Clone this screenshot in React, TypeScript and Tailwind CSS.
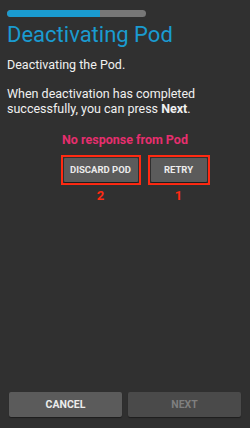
import React from "react";

export default function App() {
  return (
    <div
      className="w-[250px] h-[428px] bg-[#303030] flex flex-col text-white overflow-hidden"
      style={{ fontFamily: "Roboto, 'Liberation Sans', sans-serif" }}
    >
      <div className="px-[7px] pt-[10px]">
        <div className="w-[139px] h-[7px] rounded-full bg-[#777777] overflow-hidden">
          <div className="w-[93px] h-full bg-[#1a9bd0] rounded-l-full" />
        </div>
        <div className="mt-[4px] text-[22px] leading-[28px] text-[#1a9bd0]">Deactivating Pod</div>
        <div className="mt-[8px] text-[12.5px] leading-[15px] text-[#f0f0f0]">Deactivating the Pod.</div>
        <div className="mt-[14px] text-[12.5px] leading-[15px] text-[#f0f0f0]">
          When deactivation has completed successfully, you can press <b>Next</b>.
        </div>
        <div className="mt-[16px] text-center text-[12.5px] leading-[16px] font-bold text-[#e62e6e]">
          No response from Pod
        </div>
        <div className="mt-[7px] flex justify-center gap-[7px] pl-[20px]">
          <div className="flex flex-col items-center">
            <div className="border-2 border-[#ff2a12] p-[1px]">
              <div className="h-[24px] w-[74px] bg-[#5b5b5b] flex items-center justify-center text-[9.5px] font-bold text-[#ececec] rounded-[1px] shadow-[0_1px_1px_rgba(0,0,0,0.4)]">
                DISCARD POD
              </div>
            </div>
            <div className="mt-[4px] text-[13px] leading-[14px] font-bold text-[#ff2a12]">2</div>
          </div>
          <div className="flex flex-col items-center">
            <div className="border-2 border-[#ff2a12] p-[1px]">
              <div className="h-[24px] w-[56px] bg-[#5b5b5b] flex items-center justify-center text-[9.5px] font-bold text-[#ececec] rounded-[1px] shadow-[0_1px_1px_rgba(0,0,0,0.4)]">
                RETRY
              </div>
            </div>
            <div className="mt-[4px] text-[13px] leading-[14px] font-bold text-[#ff2a12]">1</div>
          </div>
        </div>
      </div>
      <div className="mt-auto mb-[11px] flex gap-[6px] px-[9px]">
        <div className="flex-1 h-[25px] bg-[#5b5b5b] rounded-[2px] flex items-center justify-center text-[10.5px] font-bold text-[#ececec] shadow-[0_1px_1px_rgba(0,0,0,0.4)]">
          CANCEL
        </div>
        <div className="flex-1 h-[25px] bg-[#4a4a4a] rounded-[2px] flex items-center justify-center text-[10.5px] font-bold text-[#7f7f7f] shadow-[0_1px_1px_rgba(0,0,0,0.4)]">
          NEXT
        </div>
      </div>
    </div>
  );
}
